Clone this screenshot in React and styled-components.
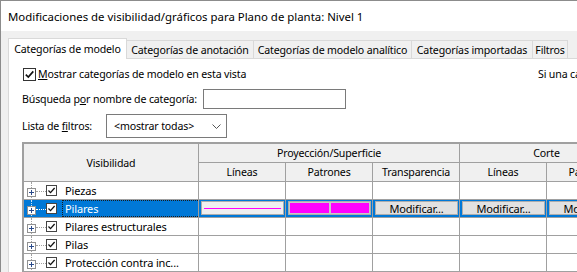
import styled, { createGlobalStyle } from "styled-components";

const GlobalStyle = createGlobalStyle`
  html, body {
    margin: 0;
    padding: 0;
    background: #f0f0f0;
  }
  body {
    font-family: "Noto Sans", sans-serif;
    font-size: 10.6px;
    letter-spacing: -0.15px;
    color: #000;
    overflow: hidden;
  }
`;

const Window = styled.div`
  width: 577px;
  height: 272px;
  box-sizing: border-box;
  border-top: 1px solid #8c8c8c;
  border-left: 1px solid #8c8c8c;
  background: #f0f0f0;
  overflow: hidden;
  display: flex;
  flex-direction: column;
`;

const TitleBar = styled.div`
  flex: none;
  height: 30px;
  display: flex;
  align-items: center;
  padding-left: 7px;
  background: #fff;
  font-size: 11.4px;
  letter-spacing: 0;
  white-space: nowrap;
`;

const Body = styled.div`
  flex: 1;
  display: flex;
  flex-direction: column;
  padding: 7px 0 0 7px;
  min-height: 0;
`;

const TabStrip = styled.div`
  display: flex;
  align-items: flex-end;
  height: 21px;
  flex: none;
`;

const Tab = styled.div`
  box-sizing: border-box;
  flex: none;
  width: ${p => p.$w}px;
  height: ${p => (p.$active ? 21 : 19)}px;
  display: flex;
  align-items: center;
  justify-content: center;
  white-space: nowrap;
  background: ${p => (p.$active ? "#fff" : "#f0f0f0")};
  border: 1px solid #d9d9d9;
  border-left: ${p => (p.$first ? "1px solid #d9d9d9" : "none")};
  border-bottom: ${p => (p.$active ? "none" : "1px solid #d9d9d9")};
  position: relative;
  z-index: ${p => (p.$active ? 2 : 0)};
  padding-top: ${p => (p.$active ? 0 : 1)}px;
`;

const Panel = styled.div`
  flex: 1;
  margin-top: -1px;
  background: #fff;
  border: 1px solid #d9d9d9;
  border-right: none;
  border-bottom: none;
  padding: 8px 0 0 13px;
  overflow: hidden;
  min-height: 0;
`;

const CheckRow = styled.div`
  display: grid;
  grid-template-columns: 516px auto;
  align-items: center;
  height: 14px;
  white-space: nowrap;
`;

const CheckLabel = styled.label`
  display: flex;
  align-items: center;
  gap: 2px;
  padding-left: 1px;
`;

const Box = styled.span`
  box-sizing: border-box;
  width: ${p => p.$size}px;
  height: ${p => p.$size}px;
  flex: none;
  border: 1px solid ${p => p.$border || "#333"};
  background: #fff;
  display: flex;
  align-items: center;
  justify-content: center;
`;

const Note = styled.span`
  white-space: nowrap;
`;

const FieldRow = styled.div`
  display: flex;
  align-items: center;
  margin-top: ${p => p.$top}px;
  white-space: nowrap;
`;

const FieldLabel = styled.span`
  flex: none;
  width: ${p => p.$w}px;
`;

const Input = styled.div`
  box-sizing: border-box;
  width: 143px;
  height: 20px;
  border: 1px solid #7a7a7a;
  background: #fff;
`;

const Select = styled.div`
  box-sizing: border-box;
  width: 121px;
  height: 24px;
  border: 1px solid #7a7a7a;
  background: #fff;
  display: flex;
  align-items: center;
  justify-content: space-between;
  padding: 0 5px 0 7px;
`;

const Grid = styled.div`
  margin-top: 4px;
  width: max-content;
  display: grid;
  grid-template-columns: 175px repeat(6, 87px);
  grid-template-rows: 19px 19px;
  grid-auto-rows: 18px;
  border-top: 2px solid #a0a0a0;
  border-left: 2px solid #a0a0a0;
`;

const HeadCell = styled.div`
  box-sizing: border-box;
  grid-column: span ${p => p.$cols || 1};
  grid-row: span ${p => p.$rows || 1};
  background: #f0f0f0;
  border-right: 1px solid #a0a0a0;
  border-bottom: 1px solid #a0a0a0;
  display: flex;
  align-items: center;
  justify-content: center;
  white-space: nowrap;
  overflow: hidden;
`;

const Cell = styled.div`
  box-sizing: border-box;
  border-right: 1px solid #a0a0a0;
  border-bottom: 1px solid #a0a0a0;
  background: ${p => (p.$selected ? "#0078d7" : "#fff")};
  padding: ${p => (p.$selected ? "1px 1px 2px 2px" : "0")};
  overflow: hidden;
`;

const TreeCell = styled(Cell)`
  position: relative;
  display: flex;
  align-items: center;
  padding: 0 0 0 3px;
  color: ${p => (p.$selected ? "#fff" : "#000")};
  white-space: nowrap;
  font-size: 11px;

  &::before {
    content: "";
    position: absolute;
    left: 7px;
    top: 0;
    bottom: -1px;
    border-left: 1px dotted ${p => (p.$selected ? "#cfe3f7" : "#a0a0a0")};
  }
`;

const Expander = styled.span`
  box-sizing: border-box;
  position: relative;
  z-index: 1;
  flex: none;
  width: 9px;
  height: 9px;
  margin-top: 3px;
  border: 1px solid #919191;
  background: #fff;
  display: flex;
`;

const Connector = styled.span`
  flex: none;
  width: 10px;
  margin-top: 2px;
  border-top: 1px dotted ${p => (p.$selected ? "#fff" : "#a0a0a0")};
`;

const RowText = styled.span`
  flex: 1;
  align-self: stretch;
  display: flex;
  align-items: center;
  margin-left: 5px;
  padding-left: 2px;
  border: 1px dotted ${p => (p.$focus ? "#1b1b1b" : "transparent")};
  border-right: none;
  overflow: hidden;
  text-overflow: ellipsis;
`;

const Button = styled.div`
  box-sizing: border-box;
  height: 14px;
  border: 1px solid #adadad;
  background: ${p => p.$bg || "#e1e1e1"};
  display: flex;
  align-items: center;
  justify-content: center;
  white-space: nowrap;
  overflow: hidden;
  padding: ${p => (p.$swatch ? "1px" : "0")};
  gap: 2px;
  font-size: 11px;
`;

const LineSwatch = styled.span`
  flex: 1;
  margin: 0 2px;
  height: 1px;
  background: #ff00ff;
`;

const FillSwatch = styled.span`
  flex: 1;
  align-self: stretch;
  background: #ff00ff;
`;

const Check = ({ size = 13 }) => (
  <svg width={size - 2} height={size - 2} viewBox="0 0 11 11">
    <path d="M1.8 5.6 L4.3 8.1 L9.3 2.4" fill="none" stroke="#111" strokeWidth="1.6" />
  </svg>
);

const Plus = () => (
  <svg width="7" height="7" viewBox="0 0 7 7">
    <path d="M1 3.5 H6 M3.5 1 V6" stroke="#2a4a8a" strokeWidth="1" />
  </svg>
);

const tabs = [
  { label: "Categorías de modelo", w: 119 },
  { label: "Categorías de anotación", w: 127 },
  { label: "Categorías de modelo analítico", w: 158 },
  { label: "Categorías importadas", w: 121 },
  { label: "Filtros", w: 35 },
];

const rows = ["Piezas", "Pilares", "Pilares estructurales", "Pilas", "Protección contra inc..."];

function DataRow({ name, selected }) {
  return (
    <>
      <TreeCell $selected={selected}>
        <Expander><Plus /></Expander>
        <Connector $selected={selected} />
        <Box $size={11} $border="#444"><Check size={11} /></Box>
        <RowText $focus={selected}>{name}</RowText>
      </TreeCell>
      {selected ? (
        <>
          <Cell $selected><Button $bg="#efefef"><LineSwatch /></Button></Cell>
          <Cell $selected><Button $swatch $bg="#c8c8c8"><FillSwatch /><FillSwatch /></Button></Cell>
          <Cell $selected><Button>Modificar...</Button></Cell>
          <Cell $selected><Button>Modificar...</Button></Cell>
          <Cell $selected><Button>Modificar...</Button></Cell>
          <Cell $selected />
        </>
      ) : (
        <>
          <Cell /><Cell /><Cell /><Cell /><Cell /><Cell />
        </>
      )}
    </>
  );
}

export default function App() {
  return (
    <>
      <GlobalStyle />
      <Window>
        <TitleBar>Modificaciones de visibilidad/gráficos para Plano de planta: Nivel 1</TitleBar>
        <Body>
          <TabStrip>
            {tabs.map((t, i) => (
              <Tab key={t.label} $w={t.w} $active={i === 0} $first={i === 0}>{t.label}</Tab>
            ))}
          </TabStrip>
          <Panel>
            <CheckRow>
              <CheckLabel>
                <Box $size={13}><Check /></Box>
                <span><u>M</u>ostrar categorías de modelo en esta vista</span>
              </CheckLabel>
              <Note>Si una categoría no está seleccionada, no será visible.</Note>
            </CheckRow>
            <FieldRow $top={8}>
              <FieldLabel $w={181}>Búsqueda p<u>o</u>r nombre de categoría:</FieldLabel>
              <Input />
            </FieldRow>
            <FieldRow $top={5}>
              <FieldLabel $w={84}>Lista de <u>fi</u>ltros:</FieldLabel>
              <Select>
                <span>&lt;mostrar todas&gt;</span>
                <svg width="9" height="5" viewBox="0 0 9 5">
                  <path d="M0.5 0.5 L4.5 4.5 L8.5 0.5" fill="none" stroke="#555" strokeWidth="1" />
                </svg>
              </Select>
            </FieldRow>
            <Grid>
              <HeadCell $rows={2}>Visibilidad</HeadCell>
              <HeadCell $cols={3}>Proyección/Superficie</HeadCell>
              <HeadCell $cols={2}>Corte</HeadCell>
              <HeadCell $rows={2}>Medios tonos</HeadCell>
              <HeadCell>Líneas</HeadCell>
              <HeadCell>Patrones</HeadCell>
              <HeadCell>Transparencia</HeadCell>
              <HeadCell>Líneas</HeadCell>
              <HeadCell>Patrones</HeadCell>
              {rows.map(r => (
                <DataRow key={r} name={r} selected={r === "Pilares"} />
              ))}
            </Grid>
          </Panel>
        </Body>
      </Window>
    </>
  );
}
